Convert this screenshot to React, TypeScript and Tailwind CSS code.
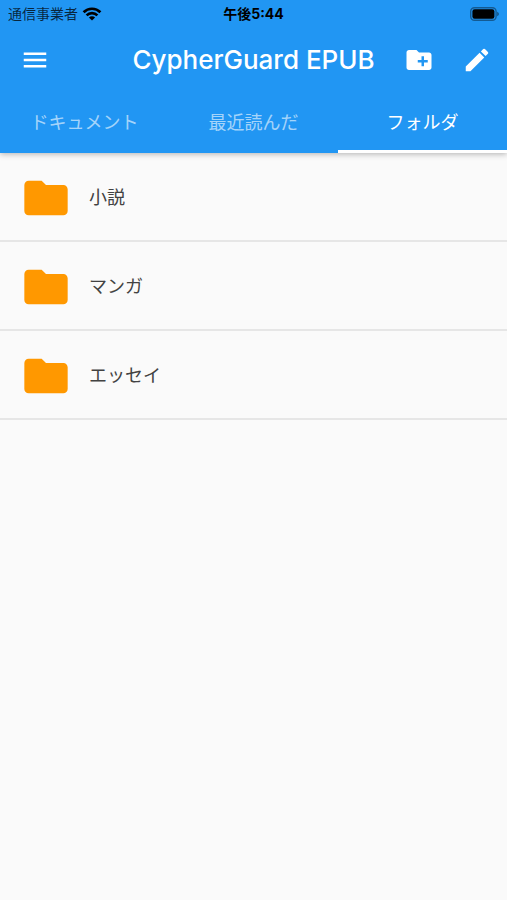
import { useState } from 'react';
import clsx from 'clsx';
import { MdCreateNewFolder, MdEdit, MdFolder, MdMenu } from 'react-icons/md';

const TABS = ['ドキュメント', '最近読んだ', 'フォルダ'];
const FOLDERS = ['小説', 'マンガ', 'エッセイ'];

export default function App() {
  const [active, setActive] = useState('フォルダ');

  return (
    <div
      lang="ja"
      className="min-h-screen bg-[#fafafa] font-['Inter','Noto_Sans_CJK_JP',sans-serif] text-[#424242]"
    >
      <header className="relative bg-[#2196f3] text-white shadow-[0_1px_6px_rgba(0,0,0,0.3)]">
        <StatusBar />
        <Toolbar />
        <div role="tablist" className="grid h-[61px] grid-cols-3">
          {TABS.map((tab) => (
            <button
              key={tab}
              type="button"
              role="tab"
              aria-selected={tab === active}
              onClick={() => setActive(tab)}
              className={clsx(
                'border-b-3 pt-1 text-lg leading-6',
                tab === active ? 'border-white text-white' : 'border-transparent text-white/60',
              )}
            >
              {tab}
            </button>
          ))}
        </div>
      </header>

      <ul>
        {FOLDERS.map((name) => (
          <FolderRow key={name} name={name} />
        ))}
      </ul>
    </div>
  );
}

function StatusBar() {
  return (
    <div className="grid h-7 grid-cols-3 items-center px-2 text-sm leading-5 text-black">
      <div className="flex items-center gap-1">
        <span className="text-black/75">通信事業者</span>
        <WifiIcon />
      </div>
      <span className="text-center font-bold">午後5:44</span>
      <BatteryIcon />
    </div>
  );
}

function Toolbar() {
  return (
    <div className="grid h-16 grid-cols-[1fr_auto_1fr] items-center px-[15px]">
      <button type="button" aria-label="メニュー" className="justify-self-start pl-[5px]">
        <MdMenu className="size-[30px]" />
      </button>
      <h1 className="text-[26px] leading-8 font-medium">CypherGuard EPUB</h1>
      <div className="flex justify-end gap-7">
        <button type="button" aria-label="フォルダを作成">
          <MdCreateNewFolder className="size-[30px]" />
        </button>
        <button type="button" aria-label="編集">
          <MdEdit className="size-[30px]" />
        </button>
      </div>
    </div>
  );
}

function FolderRow({ name }: { name: string }) {
  return (
    <li className="flex h-[89px] items-center gap-[17px] border-b-2 border-[#e6e6e6] px-5 pt-0.5">
      <MdFolder className="size-[52px] text-[#ff9800]" />
      <span className="text-lg leading-6">{name}</span>
    </li>
  );
}

function WifiIcon() {
  return (
    <svg viewBox="0 0 20 14" className="h-3.5 w-5" aria-hidden="true">
      <g fill="none" stroke="currentColor" strokeWidth="2.7">
        <path d="M1.6 5.2a12 12 0 0 1 16.8 0" />
        <path d="M4.6 8.4a7.7 7.7 0 0 1 10.8 0" />
      </g>
      <path d="M10 13.6 6.9 10.5a4.4 4.4 0 0 1 6.2 0z" fill="currentColor" />
    </svg>
  );
}

function BatteryIcon() {
  return (
    <svg viewBox="0 0 29 14" className="h-3.5 w-[29px] justify-self-end" aria-hidden="true">
      <rect x="0.7" y="0.7" width="25.4" height="12.6" rx="3.8" fill="none" stroke="#000" strokeOpacity="0.4" strokeWidth="1.4" />
      <rect x="2.4" y="2.2" width="22" height="9.6" rx="2.2" />
      <path d="M27.2 4.8c2.2.9 2.2 3.5 0 4.4z" fillOpacity="0.45" />
    </svg>
  );
}
